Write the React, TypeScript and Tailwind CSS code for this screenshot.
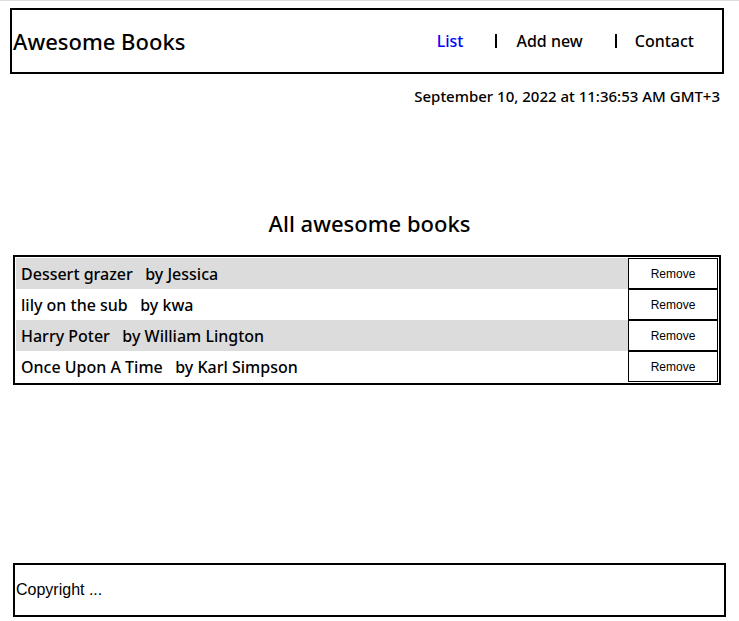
const books = [
  { title: 'Dessert grazer', author: 'Jessica' },
  { title: 'lily on the sub', author: 'kwa' },
  { title: 'Harry Poter', author: 'William Lington' },
  { title: 'Once Upon A Time', author: 'Karl Simpson' },
];

const font = "font-['Noto_Sans',sans-serif]";

export default function App() {
  return (
    <div className={`min-h-[621px] w-[739px] bg-white font-medium text-black ${font}`}>
      <div className="h-px bg-[#dedede]" />

      {/* Header */}
      <header className="ml-[10px] mt-[7px] flex h-[66px] w-[714px] items-center justify-between border-2 border-black">
        <h1 className="pl-px text-[22px] leading-none">Awesome Books</h1>
        <nav className="flex items-center pr-[28px] text-[16px]">
          <a className="text-[#0000ff]">List</a>
          <span className="ml-[32px] mr-[19px] h-[14px] w-[2px] bg-black" />
          <a>Add new</a>
          <span className="ml-[32px] mr-[18px] h-[14px] w-[2px] bg-black" />
          <a>Contact</a>
        </nav>
      </header>

      <p className="mr-[19px] mt-[15px] text-right text-[15px] leading-none">
        September 10, 2022 at 11:36:53 AM GMT+3
      </p>

      {/* Books */}
      <h2 className="mt-[108px] text-center text-[22px] leading-none">All awesome books</h2>

      <div className="ml-[13px] mt-[21px] w-[708px] border-2 border-black p-px">
        {books.map((b, i) => (
          <div
            key={b.title}
            className={`flex h-[31px] items-center justify-between ${i % 2 === 0 ? 'bg-[#dcdcdc]' : 'bg-white'}`}
          >
            <span className="pl-[5px] text-[16px]">
              {b.title}&nbsp;&nbsp; by {b.author}
            </span>
            <button className="h-full w-[90px] border border-black bg-white font-['Liberation_Sans',Arial,sans-serif] text-[12px] font-normal">
              Remove
            </button>
          </div>
        ))}
      </div>

      {/* Footer */}
      <footer className="ml-[13px] mt-[178px] flex h-[54px] w-[713px] items-center border-2 border-black">
        <p className="pl-px font-['Liberation_Sans',Arial,sans-serif] text-[16px] font-normal">Copyright ...</p>
      </footer>
    </div>
  );
}
